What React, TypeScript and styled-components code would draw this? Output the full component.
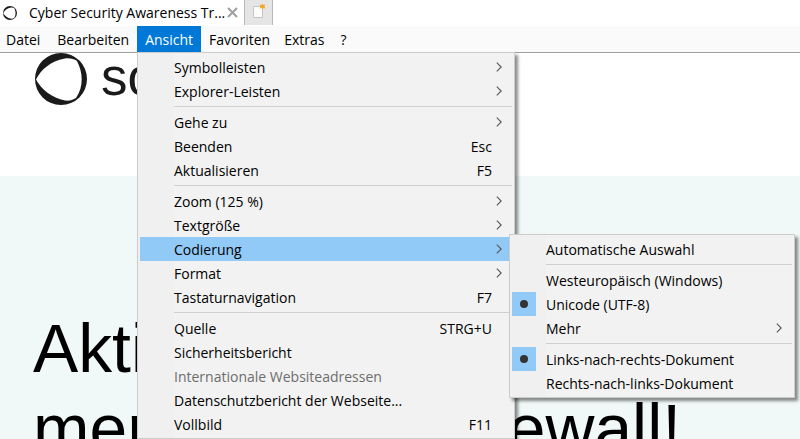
import React from 'react';
import styled, { createGlobalStyle } from 'styled-components';

const GlobalStyle = createGlobalStyle`
  html, body {
    margin: 0;
    padding: 0;
    background: #fff;
    overflow: hidden;
  }
`;

const uiFont = `"Open Sans", "Noto Sans", sans-serif`;

const Window = styled.div`
  position: relative;
  width: 800px;
  height: 439px;
  overflow: hidden;
  font-family: ${uiFont};
  font-size: 14px;
  color: #000;
`;

const TabStrip = styled.div`
  display: flex;
  height: 26px;
  background: #fff;
`;

const Tab = styled.div`
  display: flex;
  align-items: center;
  width: 244px;
  box-sizing: border-box;
  padding-left: 3px;
  height: 25px;
  white-space: nowrap;
`;

const TabTitle = styled.span`
  margin-left: 12px;
  width: 198px;
`;

const TabClose = styled.span`
  display: flex;
`;

const NewTab = styled.div`
  width: 29px;
  height: 25px;
  box-sizing: border-box;
  background: #e5e5e5;
  border-left: 1px solid #b8b8b8;
  border-right: 1px solid #b8b8b8;
  display: flex;
  align-items: center;
  justify-content: center;
`;

const MenuBar = styled.div`
  display: flex;
  height: 27px;
  box-sizing: border-box;
  background: #fafafa;
  border-bottom: 1px solid #a0a0a0;
`;

const MenuTitle = styled.div<{ $active?: boolean }>`
  display: flex;
  align-items: center;
  padding: 0 8px;
  height: 26px;
  background: ${(p) => (p.$active ? '#0078d7' : 'transparent')};
  color: ${(p) => (p.$active ? '#fff' : '#000')};

  &:first-child {
    padding-left: 6px;
    padding-right: 9px;
  }

  &:nth-child(4) {
    padding-right: 6px;
  }
`;

const Page = styled.div`
  height: 386px;
  background: #fff;
`;

const Header = styled.div`
  display: flex;
  align-items: flex-start;
  height: 123px;
  padding-left: 35px;
  box-sizing: border-box;
`;

const LogoText = styled.span`
  font-family: "Liberation Sans", Arial, sans-serif;
  font-size: 53px;
  line-height: 48px;
  margin-left: 14px;
  color: #1a1a1a;
`;

const Hero = styled.div`
  height: 263px;
  background: #f0f9f7;
  padding: 133px 0 0 33px;
  box-sizing: border-box;
`;

const Heading = styled.h1`
  margin: 0;
  font-family: "Liberation Sans", Arial, sans-serif;
  font-weight: 400;
  font-size: 67.8px;
  line-height: 80px;
  color: #000;
  white-space: nowrap;
`;

const Flyout = styled.div<{ $left: number; $top: number; $width: number }>`
  position: absolute;
  left: ${(p) => p.$left}px;
  top: ${(p) => p.$top}px;
  width: ${(p) => p.$width}px;
  box-sizing: border-box;
  padding: 2px;
  background: linear-gradient(to right, #f0f0f0 36px, #f2f2f2 36px);
  border: 1px solid #ccc;
  box-shadow: 3px 3px 3px rgba(0, 0, 0, 0.45);
`;

const Row = styled.div<{ $highlight?: boolean; $disabled?: boolean }>`
  display: grid;
  grid-template-columns: 34px 1fr auto 20px;
  align-items: center;
  height: 24px;
  background: ${(p) => (p.$highlight ? '#91c9f7' : 'transparent')};
  color: ${(p) => (p.$disabled ? '#6d6d6d' : '#000')};
`;

const Gutter = styled.span<{ $checked?: boolean }>`
  display: flex;
  align-items: center;
  justify-content: center;
  width: 24px;
  height: 24px;
  background: ${(p) => (p.$checked ? '#91c9f7' : 'transparent')};
`;

const Dot = styled.span`
  width: 8px;
  height: 8px;
  border-radius: 50%;
  background: #333;
`;

const Label = styled.span`
  white-space: nowrap;
`;

const Shortcut = styled.span`
  justify-self: end;
`;

const Arrow = styled.span`
  display: flex;
  justify-content: flex-end;
  padding-right: 10px;
`;

const Separator = styled.div`
  height: 1px;
  margin: 3px 0 3px 34px;
  background: #d0d0d0;
`;

function Chevron() {
  return (
    <svg width="6" height="10" viewBox="0 0 6 10" fill="none" stroke="#555" strokeWidth="1.1">
      <path d="M0.8 0.6 L5.2 5 L0.8 9.4" />
    </svg>
  );
}

const LogoSvg = styled.svg`
  display: block;
  flex-shrink: 0;
`;

function Ring({ size }: { size: number }) {
  return (
    <LogoSvg width={size} height={size} viewBox="0 0 52 52">
      <path
        fill="#1a1a1a"
        fillRule="evenodd"
        d="M26 0 A26 26 0 1 1 26 52 A26 26 0 1 1 26 0 Z M1 26.5 C6 17 15 8 30 5.5 C35 5 39 6 42 8 C45 14 46.7 20 46.7 26 C46.7 33 45 39 41 45 C38 47 34 48 30 47.5 C17 45 6 36 1 26.5 Z"
      />
    </LogoSvg>
  );
}

type Item =
  | { label: string; shortcut?: string; sub?: boolean; highlight?: boolean; disabled?: boolean; checked?: boolean }
  | 'sep';

const viewMenu: Item[] = [
  { label: 'Symbolleisten', sub: true },
  { label: 'Explorer-Leisten', sub: true },
  'sep',
  { label: 'Gehe zu', sub: true },
  { label: 'Beenden', shortcut: 'Esc' },
  { label: 'Aktualisieren', shortcut: 'F5' },
  'sep',
  { label: 'Zoom (125 %)', sub: true },
  { label: 'Textgröße', sub: true },
  { label: 'Codierung', sub: true, highlight: true },
  { label: 'Format', sub: true },
  { label: 'Tastaturnavigation', shortcut: 'F7' },
  'sep',
  { label: 'Quelle', shortcut: 'STRG+U' },
  { label: 'Sicherheitsbericht' },
  { label: 'Internationale Websiteadressen', disabled: true },
  { label: 'Datenschutzbericht der Webseite...' },
  { label: 'Vollbild', shortcut: 'F11' },
];

const encodingMenu: Item[] = [
  { label: 'Automatische Auswahl' },
  'sep',
  { label: 'Westeuropäisch (Windows)' },
  { label: 'Unicode (UTF-8)', checked: true },
  { label: 'Mehr', sub: true },
  'sep',
  { label: 'Links-nach-rechts-Dokument', checked: true },
  { label: 'Rechts-nach-links-Dokument' },
];

function MenuRows({ items }: { items: Item[] }) {
  return (
    <>
      {items.map((item, index) =>
        item === 'sep' ? (
          <Separator key={index} />
        ) : (
          <Row key={index} $highlight={item.highlight} $disabled={item.disabled}>
            <Gutter $checked={item.checked}>{item.checked && <Dot />}</Gutter>
            <Label>{item.label}</Label>
            <Shortcut>{item.shortcut}</Shortcut>
            <Arrow>{item.sub && <Chevron />}</Arrow>
          </Row>
        )
      )}
    </>
  );
}

export default function App() {
  return (
    <Window>
      <GlobalStyle />
      <TabStrip>
        <Tab>
          <Ring size={14} />
          <TabTitle>Cyber Security Awareness Tr...</TabTitle>
          <TabClose>
            <svg width="11" height="11" viewBox="0 0 11 11" stroke="#a0a0a0" strokeWidth="2">
              <path d="M1 1 L10 10 M10 1 L1 10" />
            </svg>
          </TabClose>
        </Tab>
        <NewTab>
          <svg width="16" height="18" viewBox="0 -2 16 18">
            <path d="M2.5 0.5 H11.5 V11.5 H2.5 Z" fill="#fbfbfb" stroke="#c4c4c4" />
            <path
              d="M11.5 -2.5 L12.4 -0.9 L14.5 -1.5 L13.4 0.5 L14.5 2.5 L12.4 1.9 L11.5 3.5 L10.6 1.9 L8.5 2.5 L9.6 0.5 L8.5 -1.5 L10.6 -0.9 Z"
              fill="#f5a623"
            />
          </svg>
        </NewTab>
      </TabStrip>
      <MenuBar>
        <MenuTitle>Datei</MenuTitle>
        <MenuTitle>Bearbeiten</MenuTitle>
        <MenuTitle $active>Ansicht</MenuTitle>
        <MenuTitle>Favoriten</MenuTitle>
        <MenuTitle>Extras</MenuTitle>
        <MenuTitle>?</MenuTitle>
      </MenuBar>
      <Page>
        <Header>
          <Ring size={52} />
          <LogoText>sosafe</LogoText>
        </Header>
        <Hero>
          <Heading>
            Aktivieren Sie Ihre
            <br />
            menschliche Firewall!
          </Heading>
        </Hero>
      </Page>
      <Flyout $left={137} $top={52} $width={378}>
        <MenuRows items={viewMenu} />
      </Flyout>
      <Flyout $left={509} $top={234} $width={286}>
        <MenuRows items={encodingMenu} />
      </Flyout>
    </Window>
  );
}
